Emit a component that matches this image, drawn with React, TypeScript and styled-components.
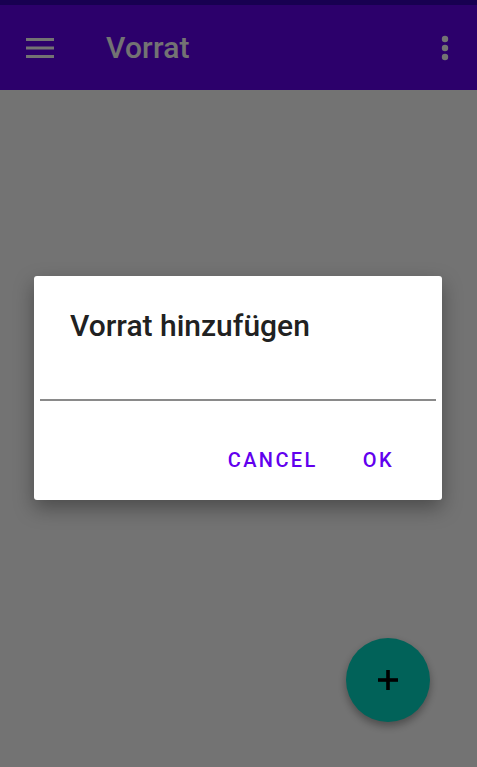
import React from "react";
import styled, { createGlobalStyle } from "styled-components";

const Global = createGlobalStyle`
  html, body { margin: 0; padding: 0; }
  body { font-family: Roboto, "Noto Sans", sans-serif; background: #ffffff; }
  * { box-sizing: border-box; }
`;

const Screen = styled.div`
  position: relative;
  width: 477px;
  height: 767px;
  overflow: hidden;
  background: #ffffff;
  display: flex;
  flex-direction: column;
`;

const StatusBar = styled.div`
  height: 5px;
  background: #3700b3;
`;

const AppBar = styled.header`
  height: 85px;
  background: #6200ee;
  display: flex;
  align-items: center;
  padding: 0 18px 0 26px;
  color: #ffffff;
`;

const IconButton = styled.div`
  display: flex;
  align-items: center;
  justify-content: center;
  width: 28px;
  height: 28px;
`;

const Title = styled.h1`
  margin: 0 0 0 52px;
  flex: 1;
  font-size: 30px;
  font-weight: 500;
  letter-spacing: 0.2px;
  color: #ffffff;
`;

const Fab = styled.button`
  position: absolute;
  right: 47px;
  bottom: 45px;
  width: 84px;
  height: 84px;
  border: none;
  border-radius: 50%;
  background: #03dac5;
  display: flex;
  align-items: center;
  justify-content: center;
  box-shadow: 0 4px 8px rgba(0,0,0,0.35);
  padding: 0;
`;

const Scrim = styled.div`
  position: absolute;
  inset: 0;
  background: rgba(0, 0, 0, 0.55);
  display: flex;
  justify-content: flex-start;
  align-items: flex-start;
  padding: 276px 0 0 34px;
`;

const Dialog = styled.div`
  width: 408px;
  height: 224px;
  background: #ffffff;
  border-radius: 3px;
  box-shadow: 0 8px 20px rgba(0,0,0,0.35);
  display: flex;
  flex-direction: column;
`;

const DialogTitle = styled.h2`
  margin: 0;
  padding: 33px 36px 0;
  font-size: 30px;
  line-height: 34px;
  font-weight: 500;
  color: #212121;
  letter-spacing: 0;
`;

const Field = styled.div`
  margin: 0 6px;
  height: 58px;
  border-bottom: 2px solid #8a8a8a;
`;

const Actions = styled.div`
  display: flex;
  justify-content: flex-end;
  align-items: center;
  gap: 21px;
  padding: 47px 36px 0 0;
`;

const TextButton = styled.button`
  border: none;
  background: transparent;
  padding: 0 12px;
  font-family: Roboto, sans-serif;
  font-size: 20px;
  font-weight: 500;
  letter-spacing: 2.4px;
  color: #6200ee;
  line-height: 24px;
`;

export default function App() {
  return (
    <Screen>
      <Global />
      <StatusBar />
      <AppBar>
        <IconButton>
          <svg width="28" height="20" viewBox="0 0 28 20">
            <rect x="0" y="0" width="28" height="3" fill="#fff" />
            <rect x="0" y="8.5" width="28" height="3" fill="#fff" />
            <rect x="0" y="17" width="28" height="3" fill="#fff" />
          </svg>
        </IconButton>
        <Title>Vorrat</Title>
        <IconButton>
          <svg width="8" height="26" viewBox="0 0 8 26">
            <circle cx="4" cy="4" r="3.2" fill="#fff" />
            <circle cx="4" cy="13" r="3.2" fill="#fff" />
            <circle cx="4" cy="22" r="3.2" fill="#fff" />
          </svg>
        </IconButton>
      </AppBar>
      <Fab>
        <svg width="20" height="20" viewBox="0 0 20 20">
          <rect x="8.2" y="0" width="3.6" height="20" fill="#000" />
          <rect x="0" y="8.2" width="20" height="3.6" fill="#000" />
        </svg>
      </Fab>
      <Scrim>
        <Dialog>
          <DialogTitle>Vorrat hinzufügen</DialogTitle>
          <Field />
          <Actions>
            <TextButton>CANCEL</TextButton>
            <TextButton>OK</TextButton>
          </Actions>
        </Dialog>
      </Scrim>
    </Screen>
  );
}
